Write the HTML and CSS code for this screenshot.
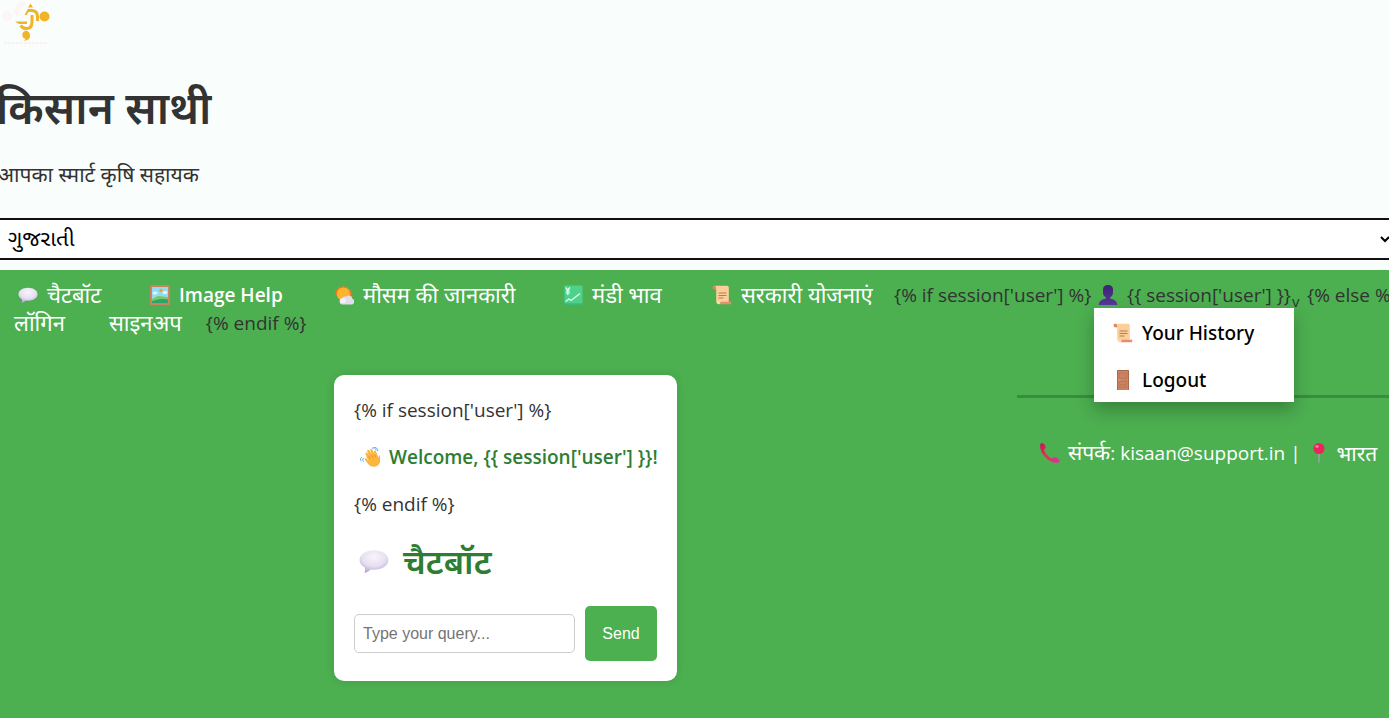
FILE: index.html
```html
<!DOCTYPE html>
<html lang="hi">
<head>
<meta charset="utf-8">
<meta name="viewport" content="width=device-width, initial-scale=1">
<title>किसान साथी</title>
<link rel="stylesheet" href="styles.css">
</head>
<body>
<svg class="sprite" aria-hidden="true">
  <defs>
    <radialGradient id="bubble-fill" cx="50%" cy="30%" r="70%">
      <stop offset="0" stop-color="#f8f5fb"/><stop offset=".6" stop-color="#e6dff0"/><stop offset="1" stop-color="#b9a5d6"/>
    </radialGradient>
    <linearGradient id="phone-fill" x1="0" y1="0" x2="1" y2="1">
      <stop offset="0" stop-color="#c4125f"/><stop offset=".45" stop-color="#f02b55"/><stop offset="1" stop-color="#d631a5"/>
    </linearGradient>
    <linearGradient id="user-fill" x1="0" y1="0" x2="0" y2="1">
      <stop offset="0" stop-color="#3c2371"/><stop offset="1" stop-color="#57379c"/>
    </linearGradient>
    <symbol id="bubble" viewBox="0 0 20 20">
      <path d="M10 2.800c5.400 0 9.600 2.900 9.600 6.500s-4.200 6.500-9.600 6.500c-.8 0-1.600-.1-2.300-.2-1 1.200-2.400 2.100-4.100 2.200.5-1.100.6-2.300.3-3.500C1.700 13.100.4 11.300.4 9.300c0-3.600 4.200-6.500 9.600-6.500z" fill="url(#bubble-fill)"/>
    </symbol>
    <symbol id="picture" viewBox="0 0 20 20">
      <rect width="20" height="20" rx="1" fill="#c98360"/>
      <rect x="2" y="2" width="16" height="16" fill="#8fdcf7"/>
      <circle cx="11" cy="5.500" r="1.800" fill="#f2a520"/>
      <ellipse cx="5" cy="8" rx="2.500" ry="1.500" fill="#e5f7fc"/><ellipse cx="15" cy="7.500" rx="2.500" ry="1.500" fill="#e5f7fc"/>
      <path d="M2 14c3-1 4-3 7-3s5 1 9 1v6H2z" fill="#7cc960"/>
      <path d="M2 16c4-.5 7-3 16-1.500V18H2z" fill="#2ea568"/>
    </symbol>
    <symbol id="weather" viewBox="0 0 20 20">
      <path d="M9.500.5l1.700 2 2.300-1.200.6 2.500 2.600.2-.3 2.500 2.300 1.200-1.500 2 1.500 2.100-2.300 1.200H3.200l.2-2L.6 9.900l1.700-2L1 5.700l2.500-1 .2-2.500 2.600.4z" fill="#ee7a21"/>
      <circle cx="9.500" cy="9" r="6.600" fill="#fbb42c"/>
      <path d="M8.500 19.500a3.300 3.300 0 0 1-.4-6.500 4 4 0 0 1 4.300-1.600 3.700 3.700 0 0 1 6 2.300 3 3 0 0 1-1.200 5.800z" fill="#e3dcec"/>
      <ellipse cx="9" cy="15.500" rx="3" ry="2.300" fill="#f5f1f8"/>
    </symbol>
    <symbol id="chart" viewBox="0 0 20 20">
      <rect x=".5" y=".5" width="19" height="19" rx="1" fill="#4ed28a"/>
      <path d="M1 1v18h18" fill="none" stroke="#2caf78"/>
      <path d="M2.500 16.500l3.500-2.500 2 1.500L17 8.500M2.500 2.500L4.800 5l2.200-2.500M4.800 5v5M2.700 6h4.200M2.700 8h4.200" fill="none" stroke="#e5fff2" stroke-width="1.200"/>
    </symbol>
    <symbol id="scroll" viewBox="0 0 20 20">
      <path d="M2.500.8H15c1.200 0 1.800.8 1.800 1.900v14.500H6.200c-1.400 0-2-.8-2-2V4.200H2.500z" fill="#fccf98"/>
      <path d="M4.200 4.200H1.500C.3 3.600.2 1.300 1.500.8h1.300c1 .5 1.500 1.500 1.400 3.400z" fill="#dc8763"/>
      <path d="M7 19.300c1.300-.2 1.500-1.500 1.300-2.600h11c.4 1.500-.3 2.600-1.500 2.600z" fill="#e88d74"/>
      <path d="M4.200 16c0 2 1 3.300 2.800 3.300 1.200 0 1.500-1.300 1.300-2.600z" fill="#fbd9ad"/>
      <path d="M6.500 8h8M6.500 10.500h8M6.500 13h5" stroke="#b8795c" stroke-width="1"/>
    </symbol>
    <symbol id="user" viewBox="0 0 20 20">
      <path d="M10 0c3.200 0 5 1.700 5 4.300v3c0 2.300-1.200 4.300-2.800 5.200v1.300c3.800.5 6.600 2.200 7.100 6.200H.7c.5-4 3.300-5.700 7.100-6.200v-1.300C6.200 11.600 5 9.600 5 7.300v-3C5 1.700 6.800 0 10 0z" fill="url(#user-fill)"/>
    </symbol>
    <symbol id="door" viewBox="0 0 20 20">
      <rect x="4" width="12" height="20" rx=".6" fill="#a9674b"/>
      <rect x="5" y="1" width="10" height="19" fill="#c98463"/>
      <path d="M6.500 3h7v5h-7zM6.500 11.500h7v3h-7zM6.500 16h7v2h-7z" fill="none" stroke="#b9734f" stroke-width=".7"/>
      <circle cx="6.500" cy="10" r=".8" fill="#f0a04c"/>
    </symbol>
    <symbol id="phone" viewBox="0 0 20 20">
      <path d="M1 .6C2.800-.2 4.500.8 5.300 3c.6 1.600.3 2.600-.8 3.400-.6.500-.4 1.300.2 2.400 1.400 2.400 3.600 4.900 6 6.300.9.500 1.600.6 2.200-.1 1-1 2.300-1.200 3.800-.2 2.100 1.300 3.300 2.500 2.600 3.900-.8 1.300-3.500 1.400-6.300.5C7.400 17.500 2 11.500.5 6 0 3.500-.1 1.200 1 .6z" fill="url(#phone-fill)"/>
    </symbol>
    <symbol id="pin" viewBox="0 0 20 20">
      <path d="M9.300 9h1.400l-.3 11h-.8z" fill="#b3a3c4"/>
      <circle cx="10" cy="5.500" r="5.500" fill="#e8265b"/>
      <ellipse cx="8" cy="3.500" rx="1.700" ry="1.300" fill="#ff7fa0"/>
    </symbol>
    <symbol id="wave" viewBox="0 0 20 20">
      <path d="M7 11L5.500 7c-.5-1.500 1.200-2.200 1.900-.9L9 8.500 7.200 4.200c-.5-1.500 1.500-2.200 2.200-.8l2.400 4.200-1.500-4.100c-.4-1.500 1.500-2 2.100-.7l2.300 4.700-.7-2.600c-.2-1.400 1.500-1.800 2-.5l1.300 3.300c.6 1.300 1 2 1.600 2.600.5-1.800 1-2.800 1.700-2.300.5 4-.1 8-2.500 10.200-3 2.300-7.200 1.800-9.500-.8L5.100 13c-1-1.200.5-2.400 1.500-1.300l2 2.200z" fill="#fbb63e"/>
      <path d="M8.700 9l2 3.200M11.600 7.800l1.800 3.300M14.500 7.600l1.300 2.500" stroke="#e48b1d" stroke-width=".7"/>
      <path d="M12 1.200c2-.8 3.700.3 4.300 2.300M13.500.2c2.500-.3 4.300 1.500 4.400 3.800M3.800 11c-1.500 1-1.200 2.600-.2 3.700M1.800 10.200c-1.700 1.300-1.500 2.800-.6 4" fill="none" stroke="#4f9fe0" stroke-width=".9"/>
    </symbol>
  </defs>
</svg>

<header class="site-header">
  <svg class="logo" viewBox="0 0 56 48" role="img" aria-label="किसान साथी">
    <g fill="#fbf5f4">
      <circle cx="7" cy="16" r="5"/>
      <path d="M13 12c1-6 6-10 11-11l3 4c-6 2-8 6-9 12z"/>
    </g>
    <path d="M4 43h43" stroke="#f8f1f0" stroke-width="2" stroke-dasharray="3 1"/>
    <g fill="#f0b429">
      <path d="M30.500 3.500l2.500 4h-5z"/>
      <circle cx="44.500" cy="16.500" r="5"/>
      <path d="M25.500 30.500a5 5 0 0 1 4.500 6c-.5 3-3 4.500-6.500 4l2.500-1.500-1.500-.5a5 4.500 0 0 1 1-8z"/>
      <path d="M15 21.500h12v2.500h-8z"/>
    </g>
    <g fill="none" stroke="#f0b429">
      <path d="M27.500 10.500h4c4 0 6 2.500 6 6v4.500" stroke-width="3"/>
      <path d="M25.500 15l3-5" stroke-width="2"/>
      <path d="M32 15v7c0 4-2 6.500-5.500 6.500-3 0-4.500-1-6-3" stroke-width="3"/>
    </g>
  </svg>
  <h1 class="title">किसान साथी</h1>
  <p class="tagline">आपका स्मार्ट कृषि सहायक</p>
  <select class="language" aria-label="भाषा">
    <option>ગુજરાતી</option>
    <option>हिन्दी</option>
    <option>English</option>
  </select>
</header>

<nav class="nav">
  <div class="nav-row nav-main">
    <a class="nav-link" href="#"><svg class="icon"><use href="#bubble"/></svg><span class="hindi">चैटबॉट</span></a>
    <a class="nav-link strong" href="#"><svg class="icon"><use href="#picture"/></svg>Image Help</a>
    <a class="nav-link" href="#"><svg class="icon"><use href="#weather"/></svg><span class="hindi">मौसम की जानकारी</span></a>
    <a class="nav-link" href="#"><svg class="icon"><use href="#chart"/></svg><span class="hindi">मंडी भाव</span></a>
    <a class="nav-link" href="#"><svg class="icon"><use href="#scroll"/></svg><span class="hindi">सरकारी योजनाएं</span></a>
    <span>{% if session['user'] %}</span>
    <div class="account">
      <span class="account-name"><svg class="icon"><use href="#user"/></svg>{{ session['user'] }} <span class="caret">v</span></span>
      <div class="menu">
        <a class="menu-item" href="#"><svg class="icon"><use href="#scroll"/></svg>Your History</a>
        <a class="menu-item" href="#"><svg class="icon"><use href="#door"/></svg>Logout</a>
      </div>
    </div>
    <span>{% else %}</span>
  </div>
  <div class="nav-row nav-auth">
    <a class="nav-link" href="#"><span class="hindi">लॉगिन</span></a>
    <a class="nav-link" href="#"><span class="hindi">साइनअप</span></a>
    <span class="template-tag">{% endif %}</span>
  </div>
</nav>

<div class="page">
  <main class="chat">
    <p class="line">{% if session['user'] %}</p>
    <p class="line welcome"><svg class="icon"><use href="#wave"/></svg>Welcome, {{ session['user'] }}!</p>
    <p class="line">{% endif %}</p>
    <h2 class="chat-title"><svg class="icon icon-large"><use href="#bubble"/></svg>चैटबॉट</h2>
    <form class="chat-form">
      <input class="query" type="text" placeholder="Type your query..." aria-label="Type your query">
      <button class="send" type="button">Send</button>
    </form>
  </main>
  <footer class="footer">
    <svg class="icon"><use href="#phone"/></svg>
    <span><span class="contact">संपर्क</span>: kisaan@support.in |</span>
    <svg class="icon"><use href="#pin"/></svg>
    <span class="contact">भारत</span>
  </footer>
</div>
</body>
</html>
```
FILE: styles.css
```css
* { box-sizing: border-box; }

body {
  margin: 0;
  min-height: 100vh;
  display: flex;
  flex-direction: column;
  overflow: hidden;
  background: #4caf50;
  color: #333;
  font: 19px/28px "Open Sans", "Noto Sans", "Noto Sans Devanagari", "Noto Sans Gujarati", sans-serif;
}

.sprite { position: absolute; width: 0; height: 0; }
.icon { flex: none; width: 20px; height: 20px; }
.icon-large { width: 30px; height: 30px; }
a { color: inherit; text-decoration: none; }

.site-header {
  display: flex;
  flex-direction: column;
  padding-bottom: 10px;
  background: #f9fefd;
}
.logo { width: 56px; height: 48px; }
.title {
  margin: 27px 0 0 -4px;
  font-size: 44px;
  font-weight: 600;
  line-height: 64px;
}
.tagline { margin: 19px 0 0 -2px; font-size: 21px; line-height: 32px; }
.language {
  height: 42px;
  margin: 28px -6px 0;
  padding: 0 8px 4px;
  border: 2px solid #111;
  border-radius: 4px;
  background: #fff;
  color: #000;
  font: 22px "Noto Sans", "Noto Sans Gujarati", sans-serif;
}

.nav { padding-top: 11px; white-space: nowrap; }
.nav-main {
  display: grid;
  grid-template-columns: 132px 184px 229px 149px 182px 204px 209px 1fr;
  padding-left: 18px;
}
.nav-auth { display: flex; gap: 44px; padding-left: 14px; }
.template-tag { margin-left: -20px; }
.nav-link, .account-name { display: flex; align-items: center; gap: 9px; height: 28px; color: #fff; }
.hindi { padding-bottom: 3px; font-size: 22px; }
.strong { font-weight: 600; }
.account { position: relative; }
.account-name { color: #333; }
.caret { align-self: flex-end; margin-left: -8px; font-size: 15px; line-height: 16px; }
.menu {
  position: absolute;
  top: 27px;
  left: -4px;
  z-index: 1;
  width: 200px;
  background: #fff;
  box-shadow: 0 8px 16px rgba(0, 0, 0, 0.25);
}
.menu-item {
  display: flex;
  align-items: center;
  gap: 9px;
  height: 47px;
  padding: 3px 19px 0;
  color: #000;
  font-family: "Noto Sans", sans-serif;
  font-weight: 500;
}

.page {
  flex: 1;
  display: grid;
  grid-template-columns: 1fr 372px;
  align-items: start;
  padding-top: 38px;
}
.chat {
  justify-self: center;
  width: 343px;
  margin-right: 6px;
  padding: 21px 20px 20px;
  border-radius: 10px;
  background: #fff;
  box-shadow: 0 0 10px rgba(0, 0, 0, 0.1);
}
.line { margin: 0 0 19px; white-space: nowrap; }
.welcome {
  display: flex;
  align-items: center;
  gap: 9px;
  padding-left: 6px;
  color: #2e7d32;
  font-weight: 600;
}
.chat-title {
  display: flex;
  align-items: center;
  gap: 14px;
  margin: 0 0 21px;
  padding-left: 5px;
  color: #2e7d32;
  font-size: 34px;
  font-weight: 600;
  line-height: 48px;
}
.chat-form { display: flex; align-items: center; gap: 10px; }
.query, .send { font: 16px "Liberation Sans", Arial, sans-serif; }
.query {
  flex: 1;
  min-width: 0;
  height: 39px;
  padding: 0 8px;
  border: 1px solid #ccc;
  border-radius: 5px;
}
.send {
  width: 72px;
  height: 55px;
  border: 0;
  border-radius: 5px;
  background: #4caf50;
  color: #fff;
}

.footer {
  display: flex;
  align-items: center;
  gap: 8px;
  margin-top: 20px;
  padding: 40px 0 20px 23px;
  border-top: 3px solid #388e3c;
  color: #fff;
  white-space: nowrap;
}
.contact { font-size: 21px; }
```
